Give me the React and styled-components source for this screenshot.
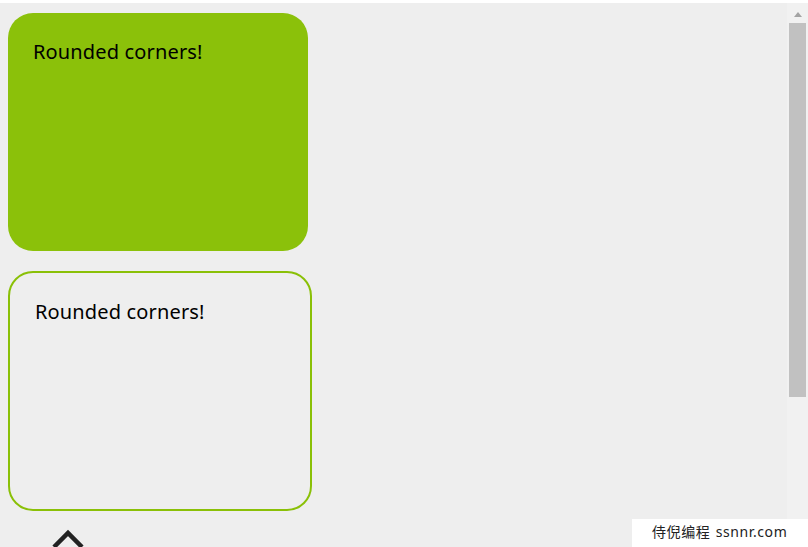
import React from 'react';
import styled, { createGlobalStyle } from 'styled-components';

const GlobalStyle = createGlobalStyle`
  html, body {
    margin: 0;
    padding: 0;
    height: 100%;
    overflow: hidden;
    background: #ffffff;
    font-family: "Noto Sans", "Liberation Sans", sans-serif;
  }
`;

const Frame = styled.div`
  height: 547px;
  padding-top: 3px;
  box-sizing: border-box;
  display: flex;
  position: relative;
  overflow: hidden;
`;

const Page = styled.main`
  flex: 1;
  background: #eeeeee;
  padding: 10px 8px 0;
  display: flex;
  flex-direction: column;
  gap: 20px;
`;

const Box = styled.div`
  flex-shrink: 0;
  width: 250px;
  height: ${(props) => (props.outline ? '210px' : '212px')};
  padding: 26px 25px 0;
  border-radius: 25px;
  background: ${(props) => (props.outline ? 'transparent' : '#8bc10a')};
  border: ${(props) => (props.outline ? '2px solid #8ac007' : 'none')};
`;

const Label = styled.p`
  margin: 0;
  font-size: 20px;
  line-height: 26px;
  letter-spacing: 0.15px;
  color: #000;
`;

const TopButton = styled.div`
  margin-top: -2px;
  margin-left: 44px;
  height: 20px;
`;

const Scrollbar = styled.div`
  width: 21px;
  background: #f1f1f1;
  display: flex;
  flex-direction: column;
  align-items: center;
`;

const Arrow = styled.div`
  width: 0;
  height: 0;
  margin: 9px 0 6px;
  border-left: 4px solid transparent;
  border-right: 4px solid transparent;
  border-bottom: 5px solid #a3a3a3;
`;

const Thumb = styled.div`
  width: 17px;
  height: 374px;
  background: #c1c1c1;
`;

const Watermark = styled.div`
  position: absolute;
  right: 0;
  bottom: 0;
  width: 176px;
  height: 28px;
  background: #ffffff;
  box-sizing: border-box;
  padding-left: 20px;
  font-size: 14px;
  line-height: 26px;
  color: #222;
  letter-spacing: 0.6px;
  word-spacing: 1px;
  white-space: nowrap;
  font-family: "Noto Sans", "Noto Sans CJK SC", sans-serif;
`;

export default function App() {
  return (
    <>
      <GlobalStyle />
      <Frame>
        <Page>
          <Box>
            <Label>Rounded corners!</Label>
          </Box>
          <Box outline>
            <Label>Rounded corners!</Label>
          </Box>
          <TopButton>
            <svg width="32" height="20" viewBox="0 0 32 20">
              <path d="M2 18 L16 4 L30 18" fill="none" stroke="#222" strokeWidth="4.5" />
            </svg>
          </TopButton>
        </Page>
        <Scrollbar>
          <Arrow />
          <Thumb />
        </Scrollbar>
        <Watermark>侍倪编程 ssnnr.com</Watermark>
      </Frame>
    </>
  );
}
